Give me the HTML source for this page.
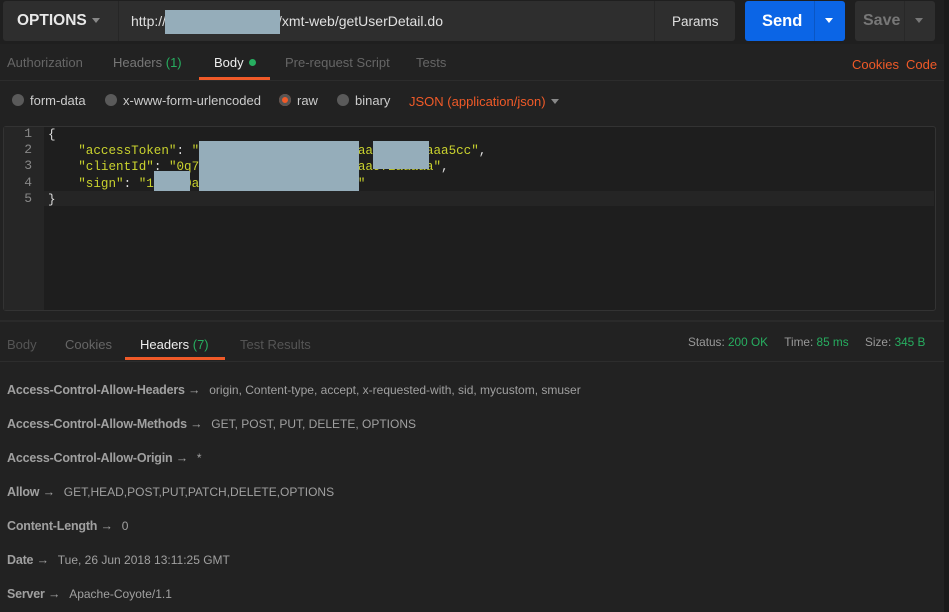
<!DOCTYPE html><html><head><style>
body{margin:0;width:949px;height:612px;background:#222;font-family:"Liberation Sans",sans-serif;position:relative;overflow:hidden}
.a{position:absolute;white-space:nowrap}
.mono{font-family:"Liberation Mono",monospace;font-size:12.2px}
.red{background:#95adba;position:absolute}
.g{color:#27ae60}
.radio{display:inline-block;width:12px;height:12px;border-radius:50%;background:#5a5a5a;vertical-align:-1px;margin-right:6px}
.hk{color:#a0a0a0;font-weight:bold;font-size:12.5px;letter-spacing:-.2px}
.hv{color:#a0a0a0;font-size:12px}
</style></head><body>
<div class="a" style="left:0;top:0;width:949px;height:44px;background:#1f1f1f"></div>
<div class="a" style="left:3px;top:1px;width:256px;height:40px;background:#2e2e2e;border-radius:3px 0 0 3px"></div>
<div class="a" style="left:118px;top:1px;width:536px;height:40px;background:#2e2e2e"></div>
<div class="a" style="left:654px;top:1px;width:80px;height:40px;background:#2e2e2e;border-left:1px solid #262626;border-radius:0 3px 3px 0"></div>
<div class="a" style="left:118px;top:1px;width:1px;height:40px;background:#262626"></div>
<div class="a" style="left:17px;top:12px;color:#e8e8e8;font-weight:bold;font-size:15.5px">OPTIONS</div>
<div class="a" style="left:92px;top:18px;border:4px solid transparent;border-top:5px solid #888"></div>
<div class="a" style="left:131px;top:13px;color:#e0e0e0;font-size:14px">http://<span style="display:inline-block;width:112px"></span>/xmt-web/getUserDetail.do</div>
<div class="red" style="left:165px;top:10px;width:115px;height:24px"></div>
<div class="a" style="left:672px;top:14px;color:#e0e0e0;font-size:13.5px">Params</div>
<div class="a" style="left:745px;top:1px;width:100px;height:40px;background:#0b65e6;border-radius:3px"></div>
<div class="a" style="left:814px;top:1px;width:1px;height:40px;background:#0a56c4"></div>
<div class="a" style="left:762px;top:12px;color:#fff;font-weight:bold;font-size:16.5px">Send</div>
<div class="a" style="left:825px;top:18px;border:4px solid transparent;border-top:5px solid #fff"></div>
<div class="a" style="left:855px;top:1px;width:80px;height:40px;background:#2f2f2f;border-radius:3px"></div>
<div class="a" style="left:904px;top:1px;width:1px;height:40px;background:#282828"></div>
<div class="a" style="left:863px;top:12px;color:#777;font-weight:bold;font-size:16px">Save</div>
<div class="a" style="left:915px;top:18px;border:4px solid transparent;border-top:5px solid #777"></div>
<div class="a" style="left:0;top:80px;width:949px;height:1px;background:#2c2c2c"></div>
<div class="a" style="left:7px;top:55px;color:#666;font-size:13px">Authorization</div>
<div class="a" style="left:113px;top:55px;color:#777;font-size:13px">Headers <span class="g">(1)</span></div>
<div class="a" style="left:214px;top:55px;color:#eee;font-size:13px">Body <span style="display:inline-block;width:7px;height:7px;border-radius:50%;background:#27ae60;vertical-align:1px;margin-left:2px"></span></div>
<div class="a" style="left:199px;top:77px;width:71px;height:3px;background:#f05a28"></div>
<div class="a" style="left:285px;top:55px;color:#666;font-size:13px">Pre-request Script</div>
<div class="a" style="left:416px;top:55px;color:#666;font-size:13px">Tests</div>
<div class="a" style="left:852px;top:57px;color:#f05a28;font-size:13px">Cookies</div>
<div class="a" style="left:906px;top:57px;color:#f05a28;font-size:13px">Code</div>
<div class="a" style="left:12px;top:93px;color:#ccc;font-size:13px"><span class="radio"></span>form-data</div>
<div class="a" style="left:105px;top:93px;color:#ccc;font-size:13px"><span class="radio"></span>x-www-form-urlencoded</div>
<div class="a" style="left:279px;top:93px;color:#ccc;font-size:13px"><span class="radio" style="background:#f05a28;box-shadow:inset 0 0 0 3px #555"></span>raw</div>
<div class="a" style="left:337px;top:93px;color:#ccc;font-size:13px"><span class="radio"></span>binary</div>
<div class="a" style="left:409px;top:94px;color:#f05a28;font-size:13px">JSON (application/json)</div>
<div class="a" style="left:551px;top:99px;border:4px solid transparent;border-top:5px solid #888"></div>
<div class="a" style="left:3px;top:126px;width:931px;height:183px;background:#1e1e1e;border:1px solid #333;border-radius:3px"></div>
<div class="a" style="left:4px;top:127px;width:40px;height:183px;background:#262626"></div>
<div class="a" style="left:44px;top:191px;width:890px;height:15px;background:#252525"></div>
<div class="a mono" style="left:0;top:126px;width:32px;text-align:right;color:#888;line-height:16.2px;font-size:13px">1<br>2<br>3<br>4<br>5</div>
<div class="a mono" style="left:48px;top:127px;color:#ddd;line-height:16.2px;font-size:12.6px">{<br>&nbsp;&nbsp;&nbsp;&nbsp;<span style="color:#c9d22e">"accessToken"</span>: <span style="color:#c9d22e">"1aaaaaaaaaaaaaaaaaaaaaaaaa-e2aaaa5cc"</span>,<br>&nbsp;&nbsp;&nbsp;&nbsp;<span style="color:#c9d22e">"clientId"</span>: <span style="color:#c9d22e">"0q79aaaaaaaaaaaaaaaaaaaaaa972aaaaa"</span>,<br>&nbsp;&nbsp;&nbsp;&nbsp;<span style="color:#c9d22e">"sign"</span>: <span style="color:#c9d22e">"1faaa0aaaaaaaaaaaaaaaaaaaa95"</span><br>}</div>
<div class="red" style="left:199px;top:141px;width:160px;height:50px"></div>
<div class="red" style="left:373px;top:141px;width:56px;height:28px"></div>
<div class="red" style="left:154px;top:171px;width:36px;height:20px"></div>
<div class="a" style="left:0;top:320px;width:949px;height:2px;background:#2a2a2a"></div>
<div class="a" style="left:0;top:361px;width:949px;height:1px;background:#2d2d2d"></div>
<div class="a" style="left:7px;top:337px;color:#555;font-size:13px">Body</div>
<div class="a" style="left:65px;top:337px;color:#666;font-size:13px">Cookies</div>
<div class="a" style="left:140px;top:337px;color:#eee;font-size:13px">Headers <span class="g">(7)</span></div>
<div class="a" style="left:125px;top:357px;width:100px;height:3px;background:#f05a28"></div>
<div class="a" style="left:240px;top:337px;color:#555;font-size:13px">Test Results</div>
<div class="a" style="left:688px;top:335px;color:#999;font-size:11.8px">Status: <span class="g">200 OK</span>&nbsp;&nbsp;&nbsp;&nbsp; Time: <span class="g">85 ms</span>&nbsp;&nbsp;&nbsp;&nbsp; Size: <span class="g">345 B</span></div>
<div class="a" style="left:7px;top:381px"><span class="hk">Access-Control-Allow-Headers →</span>&nbsp; <span class="hv">origin, Content-type, accept, x-requested-with, sid, mycustom, smuser</span></div>
<div class="a" style="left:7px;top:415px"><span class="hk">Access-Control-Allow-Methods →</span>&nbsp; <span class="hv">GET, POST, PUT, DELETE, OPTIONS</span></div>
<div class="a" style="left:7px;top:449px"><span class="hk">Access-Control-Allow-Origin →</span>&nbsp; <span class="hv">*</span></div>
<div class="a" style="left:7px;top:483px"><span class="hk">Allow →</span>&nbsp; <span class="hv">GET,HEAD,POST,PUT,PATCH,DELETE,OPTIONS</span></div>
<div class="a" style="left:7px;top:517px"><span class="hk">Content-Length →</span>&nbsp; <span class="hv">0</span></div>
<div class="a" style="left:7px;top:551px"><span class="hk">Date →</span>&nbsp; <span class="hv">Tue, 26 Jun 2018 13:11:25 GMT</span></div>
<div class="a" style="left:7px;top:585px"><span class="hk">Server →</span>&nbsp; <span class="hv">Apache-Coyote/1.1</span></div>
<div class="a" style="left:944px;top:0;width:5px;height:612px;background:#1a1a1a"></div>
</body></html>
